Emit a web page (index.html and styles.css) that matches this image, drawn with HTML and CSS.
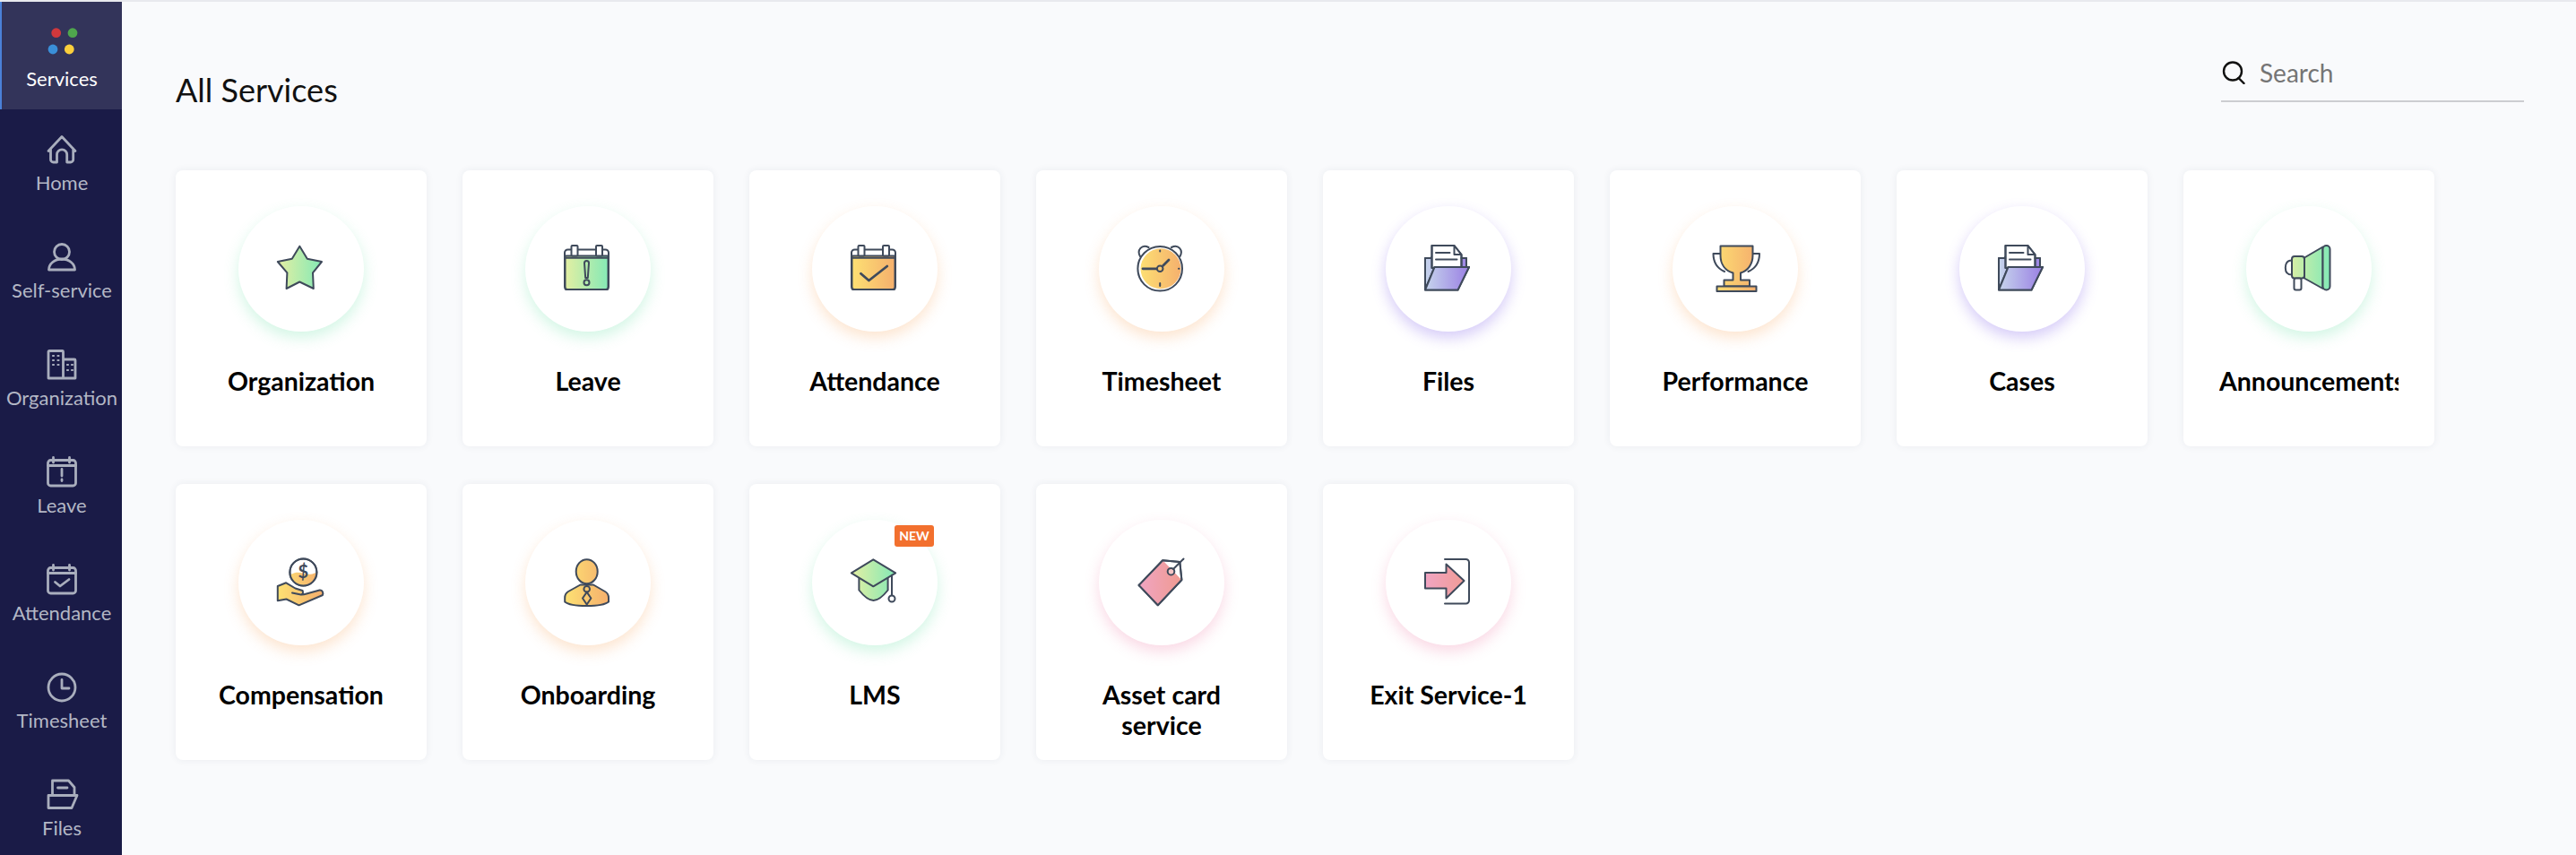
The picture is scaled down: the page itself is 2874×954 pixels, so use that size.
FILE: index.html
```html
<!DOCTYPE html>
<html lang="en">
<head>
    <meta charset="UTF-8">
    <title>All Services</title>
    <link rel="stylesheet" href="styles.css">
</head>
<body>
    <!-- shared gradients -->
    <svg class="defs" width="0" height="0">
        <defs>
            <linearGradient id="g-green" gradientUnits="userSpaceOnUse" x1="0" y1="0" x2="50" y2="0"><stop offset="0" stop-color="#e6efa2"/><stop offset="1" stop-color="#84e9b6"/></linearGradient>
            <linearGradient id="g-orange" gradientUnits="userSpaceOnUse" x1="0" y1="0" x2="50" y2="0"><stop offset="0" stop-color="#fde273"/><stop offset="1" stop-color="#f5af6d"/></linearGradient>
            <linearGradient id="g-purple" gradientUnits="userSpaceOnUse" x1="0" y1="0" x2="50" y2="0"><stop offset="0" stop-color="#c7d6ec"/><stop offset="1" stop-color="#9a80e4"/></linearGradient>
            <linearGradient id="g-pink" gradientUnits="userSpaceOnUse" x1="0" y1="0" x2="50" y2="0"><stop offset="0" stop-color="#f0a5c4"/><stop offset="1" stop-color="#f09a90"/></linearGradient>
            <symbol id="folder" viewBox="0 0 54 54">
                <path fill="url(#g-purple)" d="M1 15h7v-1h33v1h6v12H12L1 50z"/>
                <path fill="#fff" d="M8.500 1H33.500L41.500 11V26H8.500z"/>
                <path d="M8.500 26V1H33.500L41.500 11V26M33.500 1V11H41.500"/>
                <path d="M13 9H28.500M13 16.500H36.500"/>
                <path d="M8 15H1V50.500H37.500L50 25H11.500L1 50.500M41.500 15H47V25"/>
                <path fill="url(#g-purple)" d="M11.500 25H50L37.500 50.500H1z"/>
            </symbol>
        </defs>
    </svg>

    <div class="topline"></div>
    <div class="app">
        <nav class="sidebar">
            <a href="##" class="side-item active">
                <svg class="side-icon" viewBox="0 0 36 36">
                    <circle cx="11.700" cy="3.700" r="5.400" fill="#d0383c"/>
                    <circle cx="30" cy="3.700" r="5.400" fill="#4fa64d"/>
                    <circle cx="8" cy="22" r="5.400" fill="#3a8fd9"/>
                    <circle cx="26.300" cy="22" r="5.400" fill="#fbcf3c"/>
                </svg>
                <span class="side-name">Services</span>
            </a>
            <a href="##" class="side-item">
                <svg class="side-icon" viewBox="0 0 36 36"><path d="M3 19.500L18 3.500L33 19.500M5.500 17V29a3 3 0 0 0 3 3h4V23.500a5.600 5.600 0 0 1 11.200 0V32h4a3 3 0 0 0 3-3V17"/></svg>
                <span class="side-name">Home</span>
            </a>
            <a href="##" class="side-item">
                <svg class="side-icon" viewBox="0 0 36 36"><circle cx="18" cy="12" r="8.500"/><path d="M3.500 32a14.500 12 0 0 1 29 0z"/></svg>
                <span class="side-name">Self-service</span>
            </a>
            <a href="##" class="side-item">
                <svg class="side-icon" viewBox="0 0 36 36"><path d="M3 33V3.500a1 1 0 0 1 1-1H18.500a1 1 0 0 1 1 1V33M19.500 12H32a1 1 0 0 1 1 1V33H3"/><path class="dots" d="M8 8h1M13.500 8h1M8 13h1M13.500 13h1M8 18h1M13.500 18h1M24 18h1M29 18h1M24 24h1M29 24h1"/></svg>
                <span class="side-name">Organization</span>
            </a>
            <a href="##" class="side-item">
                <svg class="side-icon" viewBox="0 0 36 36"><rect x="2.500" y="4.500" width="31" height="28.500" rx="3"/><path d="M8.500 1.500V7M26.500 1.500V7M2.500 10.500H33.500M18 14.500V22M18 26v1.500"/></svg>
                <span class="side-name">Leave</span>
            </a>
            <a href="##" class="side-item">
                <svg class="side-icon" viewBox="0 0 36 36"><rect x="2.500" y="4.500" width="31" height="28.500" rx="3"/><path d="M8.500 1.500V7M26.500 1.500V7M2.500 10.500H33.500M10.500 20.500L16 25L26 17.500"/></svg>
                <span class="side-name">Attendance</span>
            </a>
            <a href="##" class="side-item">
                <svg class="side-icon" viewBox="0 0 36 36"><circle cx="18" cy="18" r="15"/><path d="M18 9.500V19H26"/></svg>
                <span class="side-name">Timesheet</span>
            </a>
            <a href="##" class="side-item">
                <svg class="side-icon" viewBox="0 0 36 36"><path d="M7.500 18V2H25.500L32 9.500V18M13.500 10H24"/><path d="M3 18.500H35L29 32.500H3zM3 32.500V21"/></svg>
                <span class="side-name">Files</span>
            </a>
        </nav>

        <main class="main">
            <header class="main-head">
                <h1 class="page-title">All Services</h1>
                <div class="search">
                    <svg class="search-icon" viewBox="0 0 26 26"><circle cx="12" cy="11.500" r="10"/><path d="M18.500 19L24.500 25"/></svg>
                    <span class="search-text">Search</span>
                </div>
            </header>

            <section class="cards">
                <a href="##" class="card">
                    <div class="badge-circle green">
                        <svg class="ic" viewBox="0 0 54 54"><path fill="url(#g-green)" d="M25.300 1.700L33.800 15.700L50 19L40 31.300L40.800 49L25.300 41.500L10.600 49L11.400 31.300L.8 19L16.800 15.700z"/></svg>
                    </div>
                    <div class="card-name">Organization</div>
                </a>
                <a href="##" class="card">
                    <div class="badge-circle green">
                        <svg class="ic" viewBox="0 0 54 54">
                            <path fill="url(#g-green)" d="M1.500 12.500H49.500V49a1 1 0 0 1-1 1H2.500a1 1 0 0 1-1-1z"/>
                            <rect x="1" y="5.500" width="49" height="44.500" rx="3.500"/>
                            <path d="M1 14.700H50"/>
                            <rect fill="#fff" x="8.500" y="1" width="7" height="11.500" rx="1"/>
                            <rect fill="#fff" x="36" y="1" width="7" height="11.500" rx="1"/>
                            <path fill="url(#g-green)" d="M23 20.500a2.500 2.500 0 0 1 5 0L26.800 37H24.200z"/>
                            <circle fill="url(#g-green)" cx="25.500" cy="42.300" r="3"/>
                        </svg>
                    </div>
                    <div class="card-name">Leave</div>
                </a>
                <a href="##" class="card">
                    <div class="badge-circle orange">
                        <svg class="ic" viewBox="0 0 54 54">
                            <path fill="url(#g-orange)" d="M1.500 12.500H49.500V49a1 1 0 0 1-1 1H2.500a1 1 0 0 1-1-1z"/>
                            <rect x="1" y="5.500" width="49" height="44.500" rx="3.500"/>
                            <path d="M1 14.700H50"/>
                            <rect fill="#fff" x="8.500" y="1" width="7" height="11.500" rx="1"/>
                            <rect fill="#fff" x="36" y="1" width="7" height="11.500" rx="1"/>
                            <path class="thick" d="M11.400 32.300L20.400 40L40.800 24"/>
                        </svg>
                    </div>
                    <div class="card-name">Attendance</div>
                </a>
                <a href="##" class="card">
                    <div class="badge-circle orange">
                        <svg class="ic" viewBox="0 0 54 54">
                            <path d="M3 13C-1 6 5 -1 12.500 3M47.500 13C51.500 6 45.500 -1 38 3"/>
                            <circle cx="26" cy="26.800" r="22.500" fill="url(#g-orange)" stroke="none"/>
                            <circle cx="25.200" cy="26.800" r="24.800"/>
                            <path class="thick" d="M6 26.800H21.500M28.500 23.500L35 17"/>
                            <circle fill="url(#g-orange)" cx="25.200" cy="26.800" r="3.300"/>
                            <path d="M25.200 6.500v1M25.200 43v3M46 26.800h.5"/>
                        </svg>
                    </div>
                    <div class="card-name">Timesheet</div>
                </a>
                <a href="##" class="card">
                    <div class="badge-circle purple">
                        <svg class="ic" viewBox="0 0 54 54"><use href="#folder"/></svg>
                    </div>
                    <div class="card-name">Files</div>
                </a>
                <a href="##" class="card">
                    <div class="badge-circle orange">
                        <svg class="ic" viewBox="0 0 54 54">
                            <path d="M11.500 10H2.500C2.500 19 6 26 15 30M45.500 10H54C54 19 50.500 26 41.500 30"/>
                            <path fill="url(#g-orange)" d="M10.500 1.500H46.500V12C46.500 22 41 29 33 31.500V39.500H43V46.500H14.500V39.500H24.500V31.500C16 29 10.500 22 10.500 12z"/>
                            <path fill="url(#g-orange)" d="M6.500 46.500H50.500V52H6.500z"/>
                        </svg>
                    </div>
                    <div class="card-name">Performance</div>
                </a>
                <a href="##" class="card">
                    <div class="badge-circle purple">
                        <svg class="ic" viewBox="0 0 54 54"><use href="#folder"/></svg>
                    </div>
                    <div class="card-name">Cases</div>
                </a>
                <a href="##" class="card">
                    <div class="badge-circle green">
                        <svg class="ic" viewBox="0 0 54 54">
                            <path d="M8 17.500C2 17.500 .8 22 .8 25.700C.8 29.500 2 33.500 8 33.500"/>
                            <path fill="url(#g-green)" d="M22 14.500L42.500 2.500V49L22 37.500z"/>
                            <rect fill="url(#g-green)" x="8" y="13" width="14" height="24.500" rx="3"/>
                            <rect fill="#fff" x="10.500" y="37.500" width="8" height="13" rx="2"/>
                            <rect fill="url(#g-green)" x="42.500" y="1" width="8" height="49.500" rx="4"/>
                        </svg>
                    </div>
                    <div class="card-name">Announcements</div>
                </a>

                <a href="##" class="card">
                    <div class="badge-circle orange">
                        <svg class="ic" viewBox="0 0 54 54">
                            <circle fill="#fff" cx="29.400" cy="15.500" r="15"/>
                            <path fill="url(#g-orange)" stroke="none" d="M15.500 18C21 15 25 15.500 29.500 17C34 18.500 39 18 43.500 16C43 25 37 30 29.500 30C21 30 16 25 15.500 18z"/>
                            <circle cx="29.400" cy="15.500" r="15"/>
                            <text class="dollar" x="29.400" y="22">$</text>
                            <path fill="url(#g-orange)" d="M.8 31L10.200 27.300L20.500 33.500L28.600 36C30 39 28 40.800 25.500 40.300L17 38.500L25.500 40.300C28 40.800 30 40.500 33 39.500L47.500 35.500C50.500 35 52 38 51 41L24.500 52.300L10.500 45.500L.8 47.300z"/>
                        </svg>
                    </div>
                    <div class="card-name">Compensation</div>
                </a>
                <a href="##" class="card">
                    <div class="badge-circle orange">
                        <svg class="ic" viewBox="0 0 54 54">
                            <path fill="url(#g-orange)" d="M18.500 29.500L5 37C2 38.800 1.200 41 1.200 44V48.500C8 54.500 43 54.500 50 48.500V44C50 41 49.200 38.800 46 37L33 29.500z"/>
                            <ellipse fill="url(#g-orange)" cx="25.700" cy="14.700" rx="12" ry="13.500"/>
                            <circle fill="url(#g-orange)" cx="25.700" cy="34.300" r="3.300"/>
                            <path fill="url(#g-orange)" d="M25.700 37.600L21 44.500L25.700 51.500L30.400 44.500z"/>
                        </svg>
                    </div>
                    <div class="card-name">Onboarding</div>
                </a>
                <a href="##" class="card">
                    <div class="badge-circle green">
                        <span class="new-tag">NEW</span>
                        <svg class="ic" viewBox="0 0 54 54">
                            <path fill="url(#g-green)" d="M9.400 21V35.500C13 40 19 47 25.500 47C32 47 38 40 41.600 35.500V21z"/>
                            <path fill="url(#g-green)" d="M25.300 1.300L50.200 16.300L25.300 31.300L.8 16.300z"/>
                            <path d="M46 18.800V41.300"/>
                            <circle fill="#fff" cx="46" cy="45" r="3.500"/>
                        </svg>
                    </div>
                    <div class="card-name">LMS</div>
                </a>
                <a href="##" class="card">
                    <div class="badge-circle pink">
                        <svg class="ic" viewBox="0 0 54 54">
                            <path fill="#fff" d="M28.200 2.300L47.300 4L49.400 24L22.800 52.300L1.600 30z"/>
                            <path fill="url(#g-pink)" stroke="none" d="M29 3L48.800 23.500L22.800 52.300L1.600 30z"/>
                            <path d="M28.200 2.300L47.300 4L49.400 24L22.800 52.300L1.600 30z"/>
                            <circle fill="#f5c5c5" cx="37.500" cy="14.700" r="3.800"/>
                            <path d="M40 12L51.500 .5"/>
                        </svg>
                    </div>
                    <div class="card-name">Asset card service</div>
                </a>
                <a href="##" class="card">
                    <div class="badge-circle pink">
                        <svg class="ic" viewBox="0 0 54 54">
                            <path d="M23 1H46.500a3.500 3.500 0 0 1 3.500 3.500V47a3.500 3.500 0 0 1-3.500 3.500H23"/>
                            <path fill="url(#g-pink)" d="M1 16H24.500V6.500L44.500 25L24.500 44.500V33.500H1z"/>
                        </svg>
                    </div>
                    <div class="card-name">Exit Service-1</div>
                </a>
            </section>
        </main>
    </div>
</body>
</html>
```
FILE: styles.css
```css
*{
    padding: 0;
    margin: 0;
    box-sizing: border-box;
}

html,body{
    height: 100%;
    overflow: hidden;
}

body{
    font-family: Lato, "Open Sans", sans-serif;
    background-color: #f9fafc;
    color: #000;
    display: flex;
    flex-direction: column;
}

a{
    text-decoration: none;
    color: inherit;
}

.defs{
    position: absolute;
}

.topline{
    height: 2px;
    background-color: #e8e9ee;
}

.app{
    flex: 1;
    display: flex;
    min-height: 0;
}

/* ==================sidebar===================== */
.sidebar{
    width: 136px;
    flex-shrink: 0;
    background-color: #1a1b47;
    overflow: hidden;
}

.side-item{
    display: flex;
    flex-direction: column;
    align-items: center;
    height: 120px;
    padding-top: 27px;
    border-left: 2px solid transparent;
    color: #b3b7c5;
}

.side-item.active{
    padding-top: 31px;
    background-color: #33345a;
    border-left-color: #4a80d8;
    color: #fff;
}

.side-icon{
    width: 36px;
    height: 36px;
    overflow: visible;
    fill: none;
    stroke: #a9aebd;
    stroke-width: 2.8;
    stroke-linecap: round;
    stroke-linejoin: round;
}

.active .side-icon{
    stroke: none;
}

.side-icon .dots{
    stroke-width: 2.2;
}

.side-name{
    margin-top: 7px;
    font-size: 22px;
    line-height: 24px;
    white-space: nowrap;
}

/* ==================main===================== */
.main{
    flex: 1;
    min-width: 0;
    padding: 0 58px 0 60px;
}

.main-head{
    height: 188px;
    display: flex;
    justify-content: space-between;
    align-items: flex-start;
}

.page-title{
    margin-top: 76px;
    font-size: 36px;
    line-height: 44px;
    font-weight: 400;
    color: #111;
}

.search{
    width: 338px;
    height: 70px;
    margin-top: 42px;
    padding: 6px 2px 0 1px;
    display: flex;
    align-items: center;
    gap: 16px;
    border-bottom: 2px solid #cccdd1;
}

.search-icon{
    width: 26px;
    height: 26px;
    fill: none;
    stroke: #111;
    stroke-width: 2.4;
    stroke-linecap: round;
}

.search-text{
    font-size: 28px;
    color: #757575;
}

/* ==================cards===================== */
.cards{
    display: flex;
    flex-wrap: wrap;
    gap: 42px 40px;
}

.card{
    width: 280px;
    height: 308px;
    padding-top: 40px;
    display: flex;
    flex-direction: column;
    align-items: center;
    background-color: #fff;
    border-radius: 8px;
    box-shadow: 0 0 8px rgba(40, 50, 90, 0.07);
}

.badge-circle{
    position: relative;
    width: 140px;
    height: 140px;
    flex-shrink: 0;
    border-radius: 50%;
    background-color: #fff;
    display: flex;
    align-items: center;
    justify-content: center;
}

.badge-circle.green{
    box-shadow: 0 7px 16px rgba(110, 225, 170, 0.3);
}

.badge-circle.orange{
    box-shadow: 0 7px 16px rgba(248, 170, 100, 0.3);
}

.badge-circle.purple{
    box-shadow: 0 7px 16px rgba(130, 100, 235, 0.33);
}

.badge-circle.pink{
    box-shadow: 0 7px 16px rgba(240, 130, 170, 0.3);
}

.ic{
    width: 54px;
    height: 54px;
    overflow: visible;
    fill: none;
    stroke: #3f4a5b;
    stroke-width: 2;
    stroke-linecap: round;
    stroke-linejoin: round;
}

.ic .thick{
    stroke-width: 2.8;
}

.ic .dollar{
    fill: #3f4a5b;
    stroke: none;
    font-size: 20px;
    font-weight: 700;
    text-anchor: middle;
}

.new-tag{
    position: absolute;
    top: 6px;
    right: 4px;
    width: 44px;
    height: 24px;
    border-radius: 3px;
    background-color: #f2702e;
    color: #fff;
    font-size: 14px;
    font-weight: 700;
    line-height: 24px;
    text-align: center;
}

.card-name{
    width: 200px;
    margin-top: 38px;
    overflow: hidden;
    font-size: 28.5px;
    line-height: 34px;
    font-weight: 700;
    text-align: center;
}
```
